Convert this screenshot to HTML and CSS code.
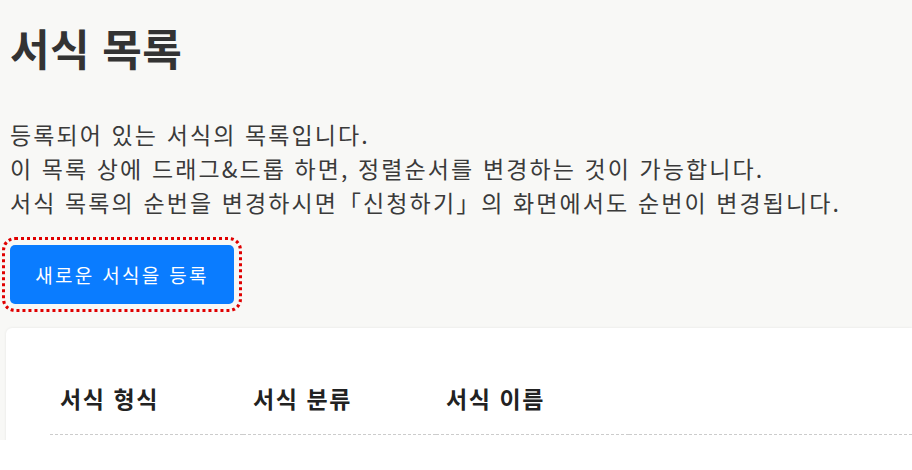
FILE: index.html
```html
<!DOCTYPE html>
<html lang="ko">
  <head>
    <meta charset="UTF-8" />
    <meta name="viewport" content="width=device-width, initial-scale=1" />
    <title>서식 목록</title>
    <link rel="stylesheet" href="styles.css">
  </head>
  <body>
    <div class="page">
      <h1 class="page-title">서식 목록</h1>

      <div class="intro">
        <p>등록되어 있는 서식의 목록입니다.</p>
        <p>이 목록 상에 드래그&amp;드롭 하면, 정렬순서를 변경하는 것이 가능합니다.</p>
        <p>서식 목록의 순번을 변경하시면「신청하기」의 화면에서도 순번이 변경됩니다.</p>
      </div>

      <button type="button" class="btn-register">새로운 서식을 등록</button>

      <div class="form-card">
        <table class="form-table">
          <thead>
            <tr>
              <th>서식 형식</th>
              <th>서식 분류</th>
              <th>서식 이름</th>
              <th></th>
            </tr>
          </thead>
        </table>
      </div>
    </div>
  </body>
</html>
```

FILE: styles.css
```css
/* General */
body {
  margin: 0;
  background: #fff;
  font-family: "Noto Sans CJK KR", "Noto Sans", sans-serif;
  color: #333;
}

.page {
  height: 440px;
  overflow: hidden;
  background: #f8f8f6;
  padding: 21px 0 0 10px;
  box-sizing: border-box;
}

/* Heading */
.page-title {
  margin: 0 0 44px 0;
  font-size: 43px;
  font-weight: 700;
  line-height: 52px;
  letter-spacing: 0.4px;
  color: #333;
}

/* Intro text */
.intro {
  margin-bottom: 26px;
}

.intro p {
  margin: 0;
  font-size: 23px;
  line-height: 34px;
  letter-spacing: 2.1px;
  color: #3a3a3a;
}

/* Register button */
.btn-register {
  display: block;
  width: 224px;
  height: 59px;
  border: none;
  border-radius: 5px;
  background: #0a7cff;
  color: #fff;
  font-family: inherit;
  font-size: 19px;
  letter-spacing: 2.3px;
  cursor: pointer;
  outline: 3px dotted #e00000;
  outline-offset: 5px;
}

/* List card */
.form-card {
  margin: 24px 0 0 -4px;
  background: #fff;
  border-radius: 6px 0 0 0;
  box-shadow: 0 0 3px rgba(0, 0, 0, 0.08);
  padding: 50px 0 0 44px;
  height: 200px;
}

.form-table {
  width: 100%;
  border-collapse: collapse;
}

.form-table th {
  text-align: left;
  padding: 0 0 16px 10px;
  width: 183px;
  font-size: 23px;
  font-weight: 700;
  letter-spacing: 1.6px;
  line-height: 40px;
  color: #222;
  border-bottom: 1px dashed #ccc;
}

.form-table th:last-child {
  width: auto;
}
```
